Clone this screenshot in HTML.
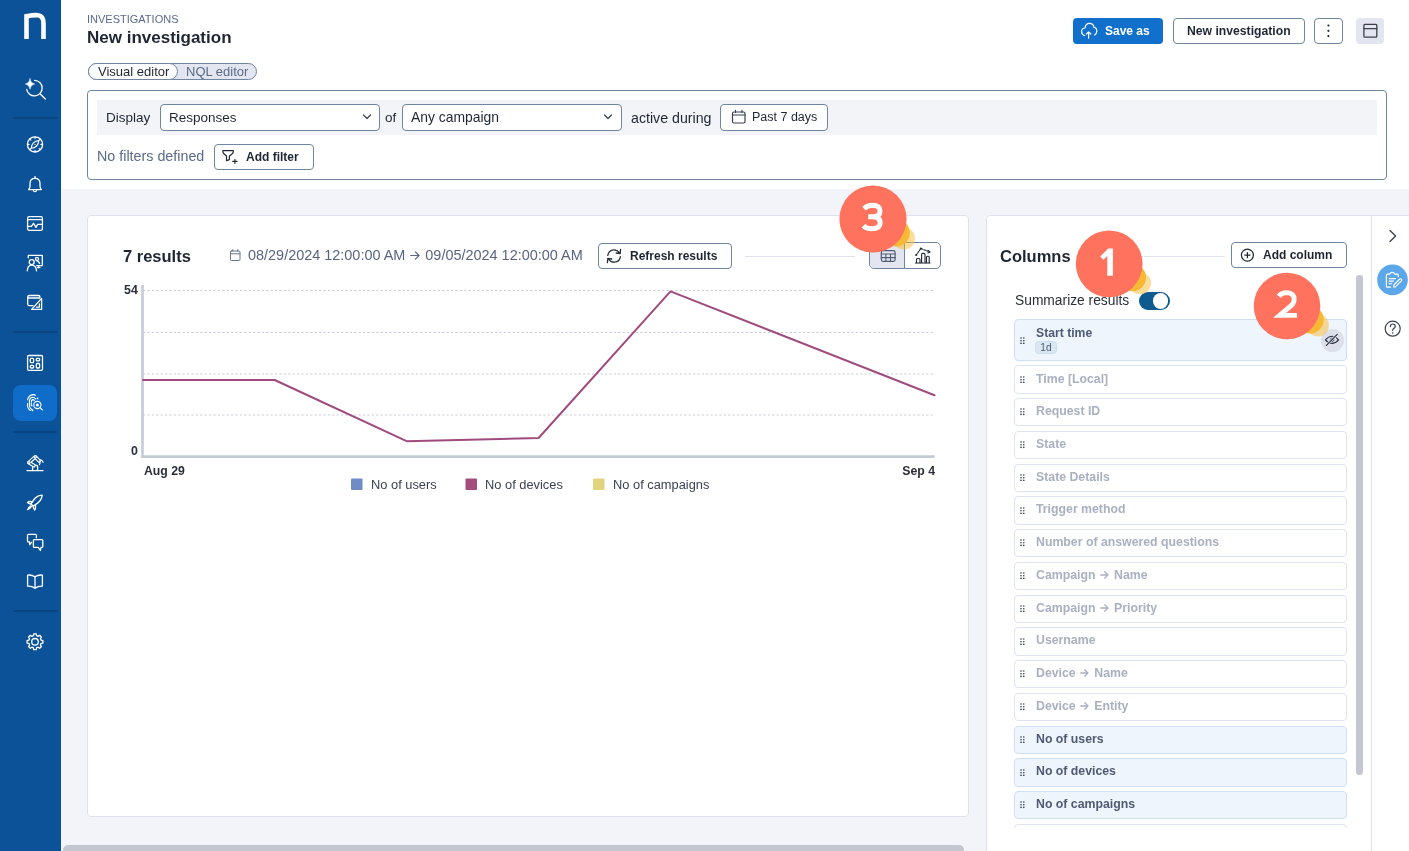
<!DOCTYPE html>
<html><head><meta charset="utf-8">
<style>
*{box-sizing:border-box;margin:0;padding:0}
html,body{width:1409px;height:851px;overflow:hidden;background:#fff;font-family:"Liberation Sans",sans-serif;color:#1f2633}
.abs{position:absolute}
#side{position:absolute;left:0;top:0;width:61px;height:851px;background:#0c5299}
#side .div{position:absolute;left:13px;width:44px;height:1.6px;background:#0a4582}
#side svg{position:absolute;overflow:visible}
#gray{position:absolute;left:61px;top:189px;width:1348px;height:662px;background:#f3f4f9}
.t{position:absolute;white-space:nowrap;line-height:1;will-change:transform}
.col{position:absolute;width:333px;height:28.3px;border:1px solid #dfe3ee;border-radius:4px;background:#fff}
.col .dr{position:absolute;left:5.3px;top:9.3px}
.col span{position:absolute;left:21.1px;font-size:12.3px;font-weight:700;color:#a9b0c0;white-space:nowrap;line-height:1;will-change:transform}
.col.on{background:#eff5fd;border-color:#cfe0f3}
.col.on span{color:#4f5b74}
</style></head><body>
<div id="side">
  <!-- logo -->
  <svg style="left:24px;top:13px" width="22" height="27" viewBox="0 0 22 27"><path d="M2.5 26V3.2 Q10 1.8 14 2.2 Q19.5 3 19.5 10 V26" fill="none" stroke="#fff" stroke-width="4.6"/></svg>
  <div class="div" style="top:117px"></div>
  <div class="div" style="top:331px"></div>
  <div class="div" style="top:431px"></div>
  <div class="div" style="top:610px"></div>
  <div class="abs" style="left:13px;top:385px;width:44px;height:35.5px;border-radius:8px;background:#0f6cc8"></div>
<svg style="left:0;top:0" width="61" height="851" viewBox="0 0 61 851" fill="none" stroke="#fff" stroke-width="1.3" stroke-linecap="round" stroke-linejoin="round">
  <!-- AI search -->
  <path d="M30 78.8 Q30.6 83.3 34.7 84 Q30.6 84.7 30 89.2 Q29.4 84.7 25.3 84 Q29.4 83.3 30 78.8Z" fill="#fff" stroke="#fff" stroke-width="0.5"/>
  <path d="M34.6 80.3 A7.8 7.8 0 1 1 26.7 89.5"/>
  <path d="M40.3 94 L45.3 99"/>
  <!-- compass -->
  <circle cx="35" cy="144.4" r="7.6"/>
  <path d="M42.40 144.40L40.90 144.40M40.23 149.63L39.17 148.57M35.00 151.80L35.00 150.30M29.77 149.63L30.83 148.57M27.60 144.40L29.10 144.40M29.77 139.17L30.83 140.23M35.00 137.00L35.00 138.50M40.23 139.17L39.17 140.23" stroke-width="1.1"/>
  <path d="M38.8 140.6 Q38.6 144 36.6 146 Q34.6 148 31.2 148.2 Q31.4 144.8 33.4 142.8 Q35.4 140.8 38.8 140.6Z" stroke-width="1.1"/>
  <circle cx="35" cy="144.4" r="0.6" fill="#fff" stroke="none"/>
  <!-- bell -->
  <path d="M28.6 189.6 L41.4 189.6 Q40 188.4 40 186 L40 183.5 Q40 178.3 35 178.3 Q30 178.3 30 183.5 L30 186 Q30 188.4 28.6 189.6Z"/>
  <path d="M35 176.6 L35 178.2"/>
  <path d="M33.4 190.6 Q35 192.6 36.6 190.6"/>
  <!-- dashboard -->
  <rect x="27.6" y="216.6" width="14.8" height="13.8" rx="1.6"/>
  <path d="M27.6 219.7 L42.4 219.7"/>
  <path d="M27.8 226.3 L31.4 226.3 L33.6 223.2 L36 227.4 L37.6 224.4 L42.2 224.4"/>
  <!-- people -->
  <path d="M28.3 257.8 L28.3 255.4 L42.3 255.4 L42.3 265.6 L36.6 265.6"/>
  <path d="M38.6 265.6 L38.6 267.5 M37.4 267.6 L40 267.6"/>
  <circle cx="31.7" cy="262.1" r="2.5"/>
  <path d="M27.3 270.8 Q27.6 265.2 31.8 265.2 Q36 265.2 36.5 270.8"/>
  <circle cx="37" cy="258.9" r="1.5"/>
  <path d="M36.4 260.5 Q38.6 261 39.6 263.4"/>
  <!-- edit/design -->
  <path d="M33 305.6 L29.3 305.6 Q27.7 305.6 27.7 304 L27.7 297 Q27.7 295.5 29.3 295.5 L38.5 295.5 Q39.9 295.5 39.9 297 L39.9 297.8"/>
  <path d="M27.8 298 L39.6 298"/>
  <path d="M31.6 309.4 L41.6 298.4 L41.6 309.4Z"/>
  <path d="M36.4 307.2 L39.4 307.2 L39.4 304"/>
  <!-- grid -->
  <rect x="27.6" y="355.5" width="14.9" height="14.8" rx="1.2"/>
  <rect x="30.3" y="358.3" width="3.3" height="4.4" rx="0.9"/>
  <rect x="36.3" y="358.3" width="3.3" height="2.6" rx="0.9"/>
  <rect x="30.3" y="365.4" width="3.3" height="2.6" rx="0.9"/>
  <rect x="36.3" y="363.5" width="3.3" height="4.5" rx="0.9"/>
  <!-- fingerprint search -->
  <g stroke-width="1.1">
  <path d="M27.5 399.8 Q28.5 395.2 33 394.6 Q34.8 394.5 35.4 395.4"/>
  <path d="M27.5 403.5 L27.5 406 Q28 409 30.3 410.5"/>
  <path d="M29.4 400.5 Q30 397.4 32.6 397.2 Q34.3 397.2 35.6 398.8"/>
  <path d="M29.4 400.5 L29.4 406 Q29.8 408.4 31.5 409.3"/>
  <path d="M31.3 402.2 Q31.3 399.6 33 399.6 Q34.3 399.8 34.4 400.6"/>
  <path d="M31.3 403.5 L31.3 404.5"/>
  <circle cx="31.6" cy="405.4" r="0.4" fill="#fff"/>
  <circle cx="37.5" cy="398.4" r="0.4" fill="#fff"/>
  <circle cx="32.5" cy="410.2" r="0.4" fill="#fff"/>
  <circle cx="37.4" cy="405" r="3.6"/>
  <circle cx="37.4" cy="405" r="1.5" fill="#fff" stroke="none"/>
  <path d="M40 407.6 L42.4 410"/>
  </g>
  <!-- robot arm -->
  <path d="M27 470.6 L43 470.6"/>
  <path d="M32.6 470.4 L32.6 466.8 Q32.6 465.1 35.1 465.1 Q37.6 465.1 37.6 466.8 L37.6 470.4"/>
  <path d="M28.9 462.6 L35.3 456.8 M28.9 462.6 L34 465.6 M35.3 456.8 L39.2 461" stroke-width="3.6"/>
  <path d="M28.9 462.6 L35.3 456.8 M28.9 462.6 L34 465.6 M35.3 456.8 L39.2 461" stroke="#0c5299" stroke-width="1.3"/>
  <circle cx="28.9" cy="462.6" r="1.1" stroke-width="1.1"/>
  <circle cx="35.3" cy="456.8" r="1.1" stroke-width="1.1"/>
  <path d="M39.4 460 Q42.2 459.6 43 462.4 M39.8 461.6 Q40.4 463.4 39.4 464.6" stroke-width="1.2"/>
  <!-- rocket -->
  <path d="M42.2 495.2 Q37 495.5 34 499.5 L30.9 503.8 L33.3 506.2 L37.6 503.1 Q41.6 500.1 42.2 495.2Z"/>
  <path d="M32.5 501.8 Q29.2 501 27.4 502.4 Q29.2 503.8 31.2 504"/>
  <path d="M35.3 505 Q36.1 508.2 34.7 510 Q33.3 508.2 33.1 506.2"/>
  <path d="M30.9 505.8 Q28.6 507.2 27.6 509.6 Q30 508.6 31.4 506.4"/>
  <!-- chats -->
  <path d="M36.4 537.7 L36.4 535.3 Q36.4 534.3 35.4 534.3 L28.6 534.3 Q27.5 534.3 27.5 535.3 L27.5 541 Q27.5 542 28.6 542 L29.5 542 L29.8 544.6 L31.5 542.3"/>
  <path d="M34.4 539.6 L41.8 539.6 Q42.8 539.6 42.8 540.6 L42.8 546.4 Q42.8 547.4 41.8 547.4 L41 547.4 L40.4 550.4 L38.2 547.4 L34.4 547.4 Q33.4 547.4 33.4 546.4 L33.4 540.6 Q33.4 539.6 34.4 539.6Z"/>
  <!-- book -->
  <path d="M35 576.8 Q31.8 574.6 27.6 575.1 L27.6 586.2 Q31.8 586 35 588.1 Q38.2 586 42.4 586.2 L42.4 575.1 Q38.2 574.6 35 576.8Z"/>
  <path d="M35 576.8 L35 588"/>
  <!-- gear -->
  <path d="M33.75 633.90 L36.25 633.90 L36.57 635.70 L38.21 636.38 L39.70 635.33 L41.47 637.10 L40.42 638.59 L41.10 640.23 L42.90 640.55 L42.90 643.05 L41.10 643.37 L40.42 645.01 L41.47 646.50 L39.70 648.27 L38.21 647.22 L36.57 647.90 L36.25 649.70 L33.75 649.70 L33.43 647.90 L31.79 647.22 L30.30 648.27 L28.53 646.50 L29.58 645.01 L28.90 643.37 L27.10 643.05 L27.10 640.55 L28.90 640.23 L29.58 638.59 L28.53 637.10 L30.30 635.33 L31.79 636.38 L33.43 635.70Z"/>
  <circle cx="35" cy="641.8" r="3.3"/>
</svg>
</div>
<div id="gray"></div>
<div class="t" style="left:87px;top:13.79px;font-size:11px;font-weight:400;color:#5a6a88;">INVESTIGATIONS</div>
<div class="t" style="left:87px;top:28.61px;font-size:17px;font-weight:700;color:#1f2633;">New investigation</div>
<div class="abs" style="left:88px;top:63px;width:169px;height:17px;border:1px solid #6f85a0;border-radius:9px;background:#e3e6f0"></div>
<div class="abs" style="left:88px;top:63px;width:90px;height:17px;border:1px solid #6f85a0;border-radius:9px;background:#fff"></div>
<div class="t" style="left:98px;top:65.10px;font-size:13px;font-weight:400;color:#1f2633;">Visual editor</div>
<div class="t" style="left:186px;top:65.10px;font-size:13px;font-weight:400;color:#5a6a88;">NQL editor</div>
<div class="abs" style="left:1073px;top:18px;width:90px;height:26px;border-radius:4px;background:#1170cc"></div>
<div class="t" style="left:1105px;top:24.94px;font-size:12px;font-weight:700;color:#fff;">Save as</div>
<div class="abs" style="left:1173px;top:18px;width:132px;height:26px;border:1px solid #6f85a0;border-radius:4px;background:#fff"></div>
<div class="t" style="left:1187px;top:24.77px;font-size:12.2px;font-weight:700;color:#1f2633;">New investigation</div>
<div class="abs" style="left:1314px;top:18px;width:29px;height:26px;border:1px solid #6f85a0;border-radius:4px;background:#fff"></div>
<div class="abs" style="left:1356px;top:18px;width:28px;height:26px;border-radius:4px;background:#e3e6f0"></div>
<svg class="abs" style="left:0;top:0;overflow:visible" width="1409" height="851" fill="none" stroke-linecap="round" stroke-linejoin="round">
<path d="M1084.6 35.6 Q1081.6 35 1081.6 31.6 Q1081.6 28.2 1085 28 Q1085.6 23.3 1089.6 23.3 Q1093.4 23.3 1094 27.4 Q1097 27.9 1096.8 31.4 Q1096.6 34.2 1094.6 35" stroke="#fff" stroke-width="1.2"/>
<path d="M1088.6 38.2 L1088.6 31.8 M1086.4 34 L1088.6 31.8 L1090.8 34" stroke="#fff" stroke-width="1.2"/>
<circle cx="1328.4" cy="25.5" r="1.1" fill="#1f2633"/><circle cx="1328.4" cy="30.8" r="1.1" fill="#1f2633"/><circle cx="1328.4" cy="36.1" r="1.1" fill="#1f2633"/>
<rect x="1363.9" y="24.3" width="12.9" height="12.9" rx="1" stroke="#3a3f4a" stroke-width="1.3"/>
<path d="M1363.9 28.6 L1376.8 28.6" stroke="#3a3f4a" stroke-width="1.3"/>
</svg>
<div class="abs" style="left:87px;top:90px;width:1300px;height:90px;border:1px solid #6f85a0;border-radius:4px;background:#fff"></div>
<div class="abs" style="left:97px;top:100px;width:1280px;height:35px;background:#f3f4f8"></div>
<div class="abs" style="left:160px;top:104px;width:220px;height:27px;border:1px solid #6f85a0;border-radius:4px;background:#fff"></div>
<div class="abs" style="left:402px;top:104px;width:220px;height:27px;border:1px solid #6f85a0;border-radius:4px;background:#fff"></div>
<div class="abs" style="left:720px;top:104px;width:108px;height:27px;border:1px solid #6f85a0;border-radius:4px;background:#fff"></div>
<div class="abs" style="left:214px;top:144px;width:100px;height:26px;border:1px solid #6f85a0;border-radius:4px;background:#fff"></div>
<div class="t" style="left:106px;top:111.17px;font-size:13.5px;font-weight:400;color:#1f2633;">Display</div>
<div class="t" style="left:169px;top:111.17px;font-size:13.5px;font-weight:400;color:#1f2633;">Responses</div>
<div class="t" style="left:385px;top:111.17px;font-size:13.5px;font-weight:400;color:#1f2633;">of</div>
<div class="t" style="left:411px;top:110.83px;font-size:13.9px;font-weight:400;color:#1f2633;">Any campaign</div>
<div class="t" style="left:630.5px;top:110.58px;font-size:14.2px;font-weight:400;color:#1f2633;">active during</div>
<div class="t" style="left:752px;top:111.22px;font-size:12.5px;font-weight:400;color:#1f2633;">Past 7 days</div>
<div class="t" style="left:97px;top:149.40px;font-size:14.3px;font-weight:400;color:#5a6a88;">No filters defined</div>
<div class="t" style="left:246px;top:151.34px;font-size:12px;font-weight:700;color:#1f2633;">Add filter</div>
<svg class="abs" style="left:0;top:0;overflow:visible" width="1409" height="851" fill="none" stroke-linecap="round" stroke-linejoin="round">
<path d="M363.5 115 L367 118.5 L370.5 115" stroke="#3a4252" stroke-width="1.2"/>
<path d="M604.5 115 L608 118.5 L611.5 115" stroke="#3a4252" stroke-width="1.2"/>
<rect x="732.5" y="112" width="12.5" height="11" rx="1.5" stroke="#3a4252" stroke-width="1.2"/>
<path d="M732.5 115 L745 115 M735.5 110.3 L735.5 112.5 M742 110.3 L742 112.5" stroke="#3a4252" stroke-width="1.2"/>
<path d="M222.8 150.6 L233.4 150.6 Q233.6 152.6 232 154 L229.4 156 L229.4 159.6 L226.5 160.6 L226.5 156 L224.2 154 Q222.6 152.6 222.8 150.6 Z" stroke="#1f2633" stroke-width="1.2"/>
<path d="M234.9 159.2 L234.9 163.6 M232.7 161.4 L237.1 161.4" stroke="#1f2633" stroke-width="1.1"/>
</svg>
<div class="abs" style="left:87px;top:215px;width:882px;height:602px;border:1px solid #dfe2ee;border-radius:4px;background:#fff"></div>
<div class="abs" style="left:986px;top:215px;width:386px;height:640px;border:1px solid #dfe2ee;border-top-left-radius:4px;background:#fff"></div>
<div class="abs" style="left:1371px;top:215px;width:38px;height:640px;background:#fff;border-left:1px solid #dfe2ee;border-top:1px solid #dfe2ee"></div>
<div class="t" style="left:123.2px;top:248.23px;font-size:16.5px;font-weight:700;color:#1f2633;">7 results</div>
<div class="t" style="left:248.3px;top:247.97px;font-size:14.45px;font-weight:400;color:#5a6480;">08/29/2024 12:00:00 AM<svg width="10" height="9" viewBox="0 0 10 9" style="display:inline-block;margin:0 5px 0 5px;vertical-align:0px" fill="none" stroke="currentColor" stroke-width="1.2" stroke-linecap="round" stroke-linejoin="round"><path d="M0.8 4.5 L9 4.5 M5.4 0.9 L9 4.5 L5.4 8.1"/></svg>09/05/2024 12:00:00 AM</div>
<div class="abs" style="left:598px;top:243px;width:134px;height:26px;border:1px solid #6f85a0;border-radius:4px;background:#fff"></div>
<div class="t" style="left:630px;top:249.64px;font-size:12px;font-weight:700;color:#1f2633;">Refresh results</div>
<div class="abs" style="left:745px;top:256px;width:110px;height:1px;background:#e1e4ee"></div>
<div class="abs" style="left:869px;top:242px;width:72px;height:27px;border:1px solid #6f85a0;border-radius:5px;background:#fff;overflow:hidden"><div style="position:absolute;left:0;top:0;width:35px;height:25px;background:#e3e6f0;border-right:1px solid #6f85a0"></div></div>
<svg class="abs" style="left:0;top:0;overflow:visible" width="1409" height="851" fill="none" stroke-linecap="round" stroke-linejoin="round">
<rect x="230.5" y="251" width="9.5" height="9.5" rx="1" stroke="#6b7690" stroke-width="1"/>
<path d="M230.5 253.8 L240 253.8 M232.8 249.6 L232.8 251.2 M237.7 249.6 L237.7 251.2" stroke="#6b7690" stroke-width="1"/>
<path d="M619.6 253.2 Q617.4 249.6 613.6 249.8 Q608.6 250.2 607.8 255.4 M620.6 249.4 L620.2 253.6 L616.2 253" stroke="#2a3040" stroke-width="1.3"/>
<path d="M608.4 258.6 Q610.6 262.4 614.6 262.2 Q619.6 261.8 620.4 256.6 M607.4 262.6 L607.8 258.4 L611.8 259" stroke="#2a3040" stroke-width="1.3"/>
<rect x="881.3" y="250.6" width="13.8" height="10.8" rx="1.8" stroke="#4f5b74" stroke-width="1.2"/>
<path d="M881.3 254 L895.1 254 M881.3 257.6 L895.1 257.6 M885.9 254 L885.9 261.4 M890.5 254 L890.5 261.4" stroke="#4f5b74" stroke-width="1.1"/>
<path d="M915.5 263 L930 263" stroke="#1f2633" stroke-width="1.2"/>
<path d="M916.5 262.8 L916.5 259.5 Q916.5 258.5 917.5 258.5 L919 258.5 Q920 258.5 920 259.5 L920 262.8 M921.6 262.8 L921.6 254.4 Q921.6 253.4 922.6 253.4 L924 253.4 Q925 253.4 925 254.4 L925 262.8 M926.5 262.8 L926.5 257.3 Q926.5 256.3 927.5 256.3 L928.5 256.3 Q929.2 256.3 929.2 257.3 L929.2 262.8" stroke="#1f2633" stroke-width="1.1"/>
<path d="M916.2 255 L920.8 248.6 L929.6 251.8" stroke="#1f2633" stroke-width="1.1" stroke-dasharray="1.6 1.2"/>
<circle cx="916.2" cy="255" r="1" fill="#1f2633"/><circle cx="920.8" cy="248.6" r="1" fill="#1f2633"/><path d="M928 250.4 L930 251.9 L927.8 253" stroke="#1f2633" stroke-width="1.1"/>
<path d="M143 290.5 L934 290.5 M143 332.5 L934 332.5 M143 374 L934 374 M143 415 L934 415" stroke="#c9ccd6" stroke-width="1" stroke-dasharray="2.2 2.2" stroke-linecap="butt"/>
<path d="M142.5 285 L142.5 456.6 L934.5 456.6" stroke="#c5cad6" stroke-width="2.6" stroke-linecap="butt" stroke-linejoin="miter"/>
<polyline points="143,380 274.7,380 406.6,441.2 538.6,438 670.5,291.4 934.5,395.2" stroke="#a04b7e" stroke-width="2"/>
<rect x="351" y="478.5" width="11.5" height="11.5" rx="1" fill="#6f8cc4"/>
<rect x="465.5" y="478.5" width="11.5" height="11.5" rx="1" fill="#a44d7c"/>
<rect x="593" y="478.5" width="11.5" height="11.5" rx="1" fill="#e1d47c"/>
</svg>
<div class="t" style="left:123.8px;top:284.40px;font-size:12.4px;font-weight:700;color:#2a2f3a;">54</div>
<div class="t" style="left:131.4px;top:444.50px;font-size:12.4px;font-weight:700;color:#2a2f3a;">0</div>
<div class="t" style="left:143.6px;top:464.51px;font-size:12.27px;font-weight:700;color:#2a2f3a;">Aug 29</div>
<div class="t" style="left:834.5px;top:464.51px;width:100px;text-align:right;font-size:12.27px;font-weight:700;color:#2a2f3a">Sep 4</div>
<div class="t" style="left:371px;top:478.52px;font-size:12.85px;font-weight:400;color:#3a4252;">No of users</div>
<div class="t" style="left:485.2px;top:478.52px;font-size:12.85px;font-weight:400;color:#3a4252;">No of devices</div>
<div class="t" style="left:612.8px;top:478.52px;font-size:12.85px;font-weight:400;color:#3a4252;">No of campaigns</div>
<div class="t" style="left:999.8px;top:247.53px;font-size:16.5px;font-weight:700;color:#1f2633;">Columns</div>
<div class="abs" style="left:1076px;top:256px;width:149px;height:1px;background:#e1e4ee"></div>
<div class="abs" style="left:1231px;top:242px;width:116px;height:26px;border:1px solid #6f85a0;border-radius:4px;background:#fff"></div>
<div class="t" style="left:1263.2px;top:249.04px;font-size:12px;font-weight:700;color:#1f2633;">Add column</div>
<div class="t" style="left:1015px;top:293.52px;font-size:13.8px;font-weight:400;color:#2a2f3a;">Summarize results</div>
<div class="abs" style="left:1139px;top:292px;width:31px;height:18px;border-radius:9px;background:#0f5a8e"></div>
<div class="abs" style="left:1152.8px;top:293.4px;width:15.6px;height:15.6px;border-radius:8px;background:#fff"></div>
<div class="abs" style="left:1000px;top:319px;width:355px;height:509px;overflow:hidden">
<div class="col on" style="left:14px;top:0px;height:42px"><svg class="dr" style="top:16.5px" width="5" height="7.4" viewBox="0 0 5 7.4"><g fill="#2f3a50"><circle cx="1" cy="1" r=".8"/><circle cx="3.8" cy="1" r=".8"/><circle cx="1" cy="3.7" r=".8"/><circle cx="3.8" cy="3.7" r=".8"/><circle cx="1" cy="6.4" r=".8"/><circle cx="3.8" cy="6.4" r=".8"/></g></svg><span style="top:7.47px;color:#4f5b74;font-size:12.2px">Start time</span><div style="position:absolute;left:19.5px;top:20.6px;width:22px;height:12.8px;border-radius:3.5px;background:#d9e7f3;border:0.6px solid #cfdeec;font-size:10.2px;line-height:11.6px;text-align:center;color:#4f5b74;will-change:transform">1d</div><div style="position:absolute;left:305.6px;top:8.6px;width:23px;height:23px;border-radius:12px;background:#dde0ea"></div></div>
<div class="col" style="left:14px;top:46.30px"><svg class="dr" width="5" height="7.4" viewBox="0 0 5 7.4"><g fill="#2f3a50"><circle cx="1" cy="1" r=".8"/><circle cx="3.8" cy="1" r=".8"/><circle cx="1" cy="3.7" r=".8"/><circle cx="3.8" cy="3.7" r=".8"/><circle cx="1" cy="6.4" r=".8"/><circle cx="3.8" cy="6.4" r=".8"/></g></svg><span style="top:6.29px">Time [Local]</span></div>
<div class="col" style="left:14px;top:79.06px"><svg class="dr" width="5" height="7.4" viewBox="0 0 5 7.4"><g fill="#2f3a50"><circle cx="1" cy="1" r=".8"/><circle cx="3.8" cy="1" r=".8"/><circle cx="1" cy="3.7" r=".8"/><circle cx="3.8" cy="3.7" r=".8"/><circle cx="1" cy="6.4" r=".8"/><circle cx="3.8" cy="6.4" r=".8"/></g></svg><span style="top:6.26px">Request ID</span></div>
<div class="col" style="left:14px;top:111.82px"><svg class="dr" width="5" height="7.4" viewBox="0 0 5 7.4"><g fill="#2f3a50"><circle cx="1" cy="1" r=".8"/><circle cx="3.8" cy="1" r=".8"/><circle cx="1" cy="3.7" r=".8"/><circle cx="3.8" cy="3.7" r=".8"/><circle cx="1" cy="6.4" r=".8"/><circle cx="3.8" cy="6.4" r=".8"/></g></svg><span style="top:6.22px">State</span></div>
<div class="col" style="left:14px;top:144.58px"><svg class="dr" width="5" height="7.4" viewBox="0 0 5 7.4"><g fill="#2f3a50"><circle cx="1" cy="1" r=".8"/><circle cx="3.8" cy="1" r=".8"/><circle cx="1" cy="3.7" r=".8"/><circle cx="3.8" cy="3.7" r=".8"/><circle cx="1" cy="6.4" r=".8"/><circle cx="3.8" cy="6.4" r=".8"/></g></svg><span style="top:6.19px">State Details</span></div>
<div class="col" style="left:14px;top:177.34px"><svg class="dr" width="5" height="7.4" viewBox="0 0 5 7.4"><g fill="#2f3a50"><circle cx="1" cy="1" r=".8"/><circle cx="3.8" cy="1" r=".8"/><circle cx="1" cy="3.7" r=".8"/><circle cx="3.8" cy="3.7" r=".8"/><circle cx="1" cy="6.4" r=".8"/><circle cx="3.8" cy="6.4" r=".8"/></g></svg><span style="top:6.16px">Trigger method</span></div>
<div class="col" style="left:14px;top:210.10px"><svg class="dr" width="5" height="7.4" viewBox="0 0 5 7.4"><g fill="#2f3a50"><circle cx="1" cy="1" r=".8"/><circle cx="3.8" cy="1" r=".8"/><circle cx="1" cy="3.7" r=".8"/><circle cx="3.8" cy="3.7" r=".8"/><circle cx="1" cy="6.4" r=".8"/><circle cx="3.8" cy="6.4" r=".8"/></g></svg><span style="top:6.12px">Number of answered questions</span></div>
<div class="col" style="left:14px;top:242.86px"><svg class="dr" width="5" height="7.4" viewBox="0 0 5 7.4"><g fill="#2f3a50"><circle cx="1" cy="1" r=".8"/><circle cx="3.8" cy="1" r=".8"/><circle cx="1" cy="3.7" r=".8"/><circle cx="3.8" cy="3.7" r=".8"/><circle cx="1" cy="6.4" r=".8"/><circle cx="3.8" cy="6.4" r=".8"/></g></svg><span style="top:6.09px">Campaign<svg width="9" height="8" viewBox="0 0 9 8" style="display:inline-block;margin:0 5px 0 4.6px;vertical-align:0px" fill="none" stroke="currentColor" stroke-width="1.3" stroke-linecap="round" stroke-linejoin="round"><path d="M0.8 4 L8 4 M4.8 0.8 L8 4 L4.8 7.2"/></svg>Name</span></div>
<div class="col" style="left:14px;top:275.62px"><svg class="dr" width="5" height="7.4" viewBox="0 0 5 7.4"><g fill="#2f3a50"><circle cx="1" cy="1" r=".8"/><circle cx="3.8" cy="1" r=".8"/><circle cx="1" cy="3.7" r=".8"/><circle cx="3.8" cy="3.7" r=".8"/><circle cx="1" cy="6.4" r=".8"/><circle cx="3.8" cy="6.4" r=".8"/></g></svg><span style="top:6.06px">Campaign<svg width="9" height="8" viewBox="0 0 9 8" style="display:inline-block;margin:0 5px 0 4.6px;vertical-align:0px" fill="none" stroke="currentColor" stroke-width="1.3" stroke-linecap="round" stroke-linejoin="round"><path d="M0.8 4 L8 4 M4.8 0.8 L8 4 L4.8 7.2"/></svg>Priority</span></div>
<div class="col" style="left:14px;top:308.38px"><svg class="dr" width="5" height="7.4" viewBox="0 0 5 7.4"><g fill="#2f3a50"><circle cx="1" cy="1" r=".8"/><circle cx="3.8" cy="1" r=".8"/><circle cx="1" cy="3.7" r=".8"/><circle cx="3.8" cy="3.7" r=".8"/><circle cx="1" cy="6.4" r=".8"/><circle cx="3.8" cy="6.4" r=".8"/></g></svg><span style="top:6.02px">Username</span></div>
<div class="col" style="left:14px;top:341.14px"><svg class="dr" width="5" height="7.4" viewBox="0 0 5 7.4"><g fill="#2f3a50"><circle cx="1" cy="1" r=".8"/><circle cx="3.8" cy="1" r=".8"/><circle cx="1" cy="3.7" r=".8"/><circle cx="3.8" cy="3.7" r=".8"/><circle cx="1" cy="6.4" r=".8"/><circle cx="3.8" cy="6.4" r=".8"/></g></svg><span style="top:5.99px">Device<svg width="9" height="8" viewBox="0 0 9 8" style="display:inline-block;margin:0 5px 0 4.6px;vertical-align:0px" fill="none" stroke="currentColor" stroke-width="1.3" stroke-linecap="round" stroke-linejoin="round"><path d="M0.8 4 L8 4 M4.8 0.8 L8 4 L4.8 7.2"/></svg>Name</span></div>
<div class="col" style="left:14px;top:373.90px"><svg class="dr" width="5" height="7.4" viewBox="0 0 5 7.4"><g fill="#2f3a50"><circle cx="1" cy="1" r=".8"/><circle cx="3.8" cy="1" r=".8"/><circle cx="1" cy="3.7" r=".8"/><circle cx="3.8" cy="3.7" r=".8"/><circle cx="1" cy="6.4" r=".8"/><circle cx="3.8" cy="6.4" r=".8"/></g></svg><span style="top:5.96px">Device<svg width="9" height="8" viewBox="0 0 9 8" style="display:inline-block;margin:0 5px 0 4.6px;vertical-align:0px" fill="none" stroke="currentColor" stroke-width="1.3" stroke-linecap="round" stroke-linejoin="round"><path d="M0.8 4 L8 4 M4.8 0.8 L8 4 L4.8 7.2"/></svg>Entity</span></div>
<div class="col on" style="left:14px;top:406.66px"><svg class="dr" width="5" height="7.4" viewBox="0 0 5 7.4"><g fill="#2f3a50"><circle cx="1" cy="1" r=".8"/><circle cx="3.8" cy="1" r=".8"/><circle cx="1" cy="3.7" r=".8"/><circle cx="3.8" cy="3.7" r=".8"/><circle cx="1" cy="6.4" r=".8"/><circle cx="3.8" cy="6.4" r=".8"/></g></svg><span style="top:5.93px">No of users</span></div>
<div class="col on" style="left:14px;top:439.42px"><svg class="dr" width="5" height="7.4" viewBox="0 0 5 7.4"><g fill="#2f3a50"><circle cx="1" cy="1" r=".8"/><circle cx="3.8" cy="1" r=".8"/><circle cx="1" cy="3.7" r=".8"/><circle cx="3.8" cy="3.7" r=".8"/><circle cx="1" cy="6.4" r=".8"/><circle cx="3.8" cy="6.4" r=".8"/></g></svg><span style="top:5.89px">No of devices</span></div>
<div class="col on" style="left:14px;top:472.18px"><svg class="dr" width="5" height="7.4" viewBox="0 0 5 7.4"><g fill="#2f3a50"><circle cx="1" cy="1" r=".8"/><circle cx="3.8" cy="1" r=".8"/><circle cx="1" cy="3.7" r=".8"/><circle cx="3.8" cy="3.7" r=".8"/><circle cx="1" cy="6.4" r=".8"/><circle cx="3.8" cy="6.4" r=".8"/></g></svg><span style="top:5.86px">No of campaigns</span></div>
<div class="col" style="left:14px;top:504.94px"><svg class="dr" width="5" height="7.4" viewBox="0 0 5 7.4"><g fill="#2f3a50"><circle cx="1" cy="1" r=".8"/><circle cx="3.8" cy="1" r=".8"/><circle cx="1" cy="3.7" r=".8"/><circle cx="3.8" cy="3.7" r=".8"/><circle cx="1" cy="6.4" r=".8"/><circle cx="3.8" cy="6.4" r=".8"/></g></svg><span style="top:5.83px"></span></div>
</div>
<div class="abs" style="left:1356.4px;top:274.6px;width:6.4px;height:500px;border-radius:3.2px;background:#c4c7d2"></div>
<div class="abs" style="left:63px;top:845px;width:901px;height:10px;border-radius:5px;background:#c2c6d1"></div>
<svg class="abs" style="left:0;top:0;overflow:visible" width="1409" height="851" fill="none" stroke-linecap="round" stroke-linejoin="round">
<path d="M1390 230.6 L1395.6 236 L1390 241.4" stroke="#3a4252" stroke-width="1.4"/>
<circle cx="1392.5" cy="279.9" r="15.3" fill="#5ca6ea"/>
<path d="M1390.6 287.2 L1387.4 287.2 Q1386.4 287.2 1386.4 286.2 L1386.4 275.2 Q1386.4 274.2 1387.4 274.2 L1389.6 274.2 Q1390.4 272.4 1392.2 272.4 Q1394 272.4 1394.8 274.2 L1397.4 274.2 Q1398.3 274.2 1398.3 275.2 L1398.3 276.6" stroke="#fff" stroke-width="1.2"/>
<path d="M1389.2 278.6 L1395.6 278.6 M1389.2 281.2 L1393.4 281.2 M1389.2 283.6 L1391.2 283.6" stroke="#fff" stroke-width="1.2"/>
<path d="M1393.8 287.2 L1393.8 285 L1399.8 279 Q1400.6 278.4 1401.4 279.2 Q1402 280 1401.4 280.8 L1395.4 286.8 Z" stroke="#fff" stroke-width="1.1"/>
<circle cx="1392.7" cy="328.7" r="7.5" stroke="#3a4252" stroke-width="1.2"/>
<path d="M1390.4 326.6 Q1390.4 324 1392.8 324 Q1395.2 324 1395.2 326.3 Q1395.2 327.8 1393.6 328.6 Q1392.7 329.1 1392.7 330.5" stroke="#3a4252" stroke-width="1.2"/>
<circle cx="1392.7" cy="333" r="0.75" fill="#3a4252"/>
<circle cx="1247.4" cy="255.1" r="6" stroke="#1f2633" stroke-width="1.2"/>
<path d="M1247.4 252.5 L1247.4 257.7 M1244.8 255.1 L1250 255.1" stroke="#1f2633" stroke-width="1.2"/>
<path d="M1325.4 339.8 Q1328.6 336.2 1332 336.2 Q1335.4 336.2 1338.6 339.8 Q1335.4 343.4 1332 343.4 Q1328.6 343.4 1325.4 339.8Z" stroke="#2a3040" stroke-width="1.15"/>
<circle cx="1332" cy="339.8" r="1.7" stroke="#2a3040" stroke-width="1"/>
<path d="M1326.4 345.4 L1337.2 334.4" stroke="#dde0ea" stroke-width="2.6"/>
<path d="M1326.4 345.4 L1337.2 334.4" stroke="#2a3040" stroke-width="1.15"/>
</svg>
<svg class="abs" style="left:0;top:0;overflow:visible" width="1409" height="851"><circle cx="903.9" cy="238.4" r="11" fill="rgba(247,185,52,0.5)"/><circle cx="896.0" cy="232.7" r="13.8" fill="#f7b934"/><circle cx="873" cy="219" r="33.6" fill="#ff735e"/><path d="M864 208.6 Q867.4 205.3 872.4 205.3 Q880 205.5 880 211 Q880 216.8 872.6 216.8 L868.2 216.8 M872.6 216.8 Q880.2 216.8 880.2 222.8 Q880.2 228.8 871.6 228.8 Q866.2 228.8 863.4 225.8" stroke="#fff" stroke-width="5" fill="none" stroke-linejoin="round" stroke-linecap="butt"/></svg>
<svg class="abs" style="left:0;top:0;overflow:visible" width="1409" height="851"><circle cx="1140.1" cy="283.2" r="11" fill="rgba(247,185,52,0.5)"/><circle cx="1132.2" cy="277.5" r="13.8" fill="#f7b934"/><circle cx="1109.2" cy="263.8" r="33.4" fill="#ff735e"/><path d="M1107.3 275.8 L1112.9 275.8 L1112.9 248.5 L1108.3 248.5 L1100.2 256.6 L1103.4 259.8 L1107.3 255.9 Z" fill="#fff"/></svg>
<svg class="abs" style="left:0;top:0;overflow:visible" width="1409" height="851"><circle cx="1317.9" cy="325.4" r="11" fill="rgba(247,185,52,0.5)"/><circle cx="1310.0" cy="319.7" r="13.8" fill="#f7b934"/><circle cx="1287" cy="306" r="33.3" fill="#ff735e"/><path d="M1278.6 296.2 Q1281.6 292.6 1286.6 292.6 Q1294.2 292.8 1294.2 299.4 Q1294.2 302.8 1290.6 306.2 L1279.6 315.4 L1297 315.4" stroke="#fff" stroke-width="4.8" fill="none" stroke-linejoin="miter" stroke-linecap="butt"/></svg>
</body></html>
